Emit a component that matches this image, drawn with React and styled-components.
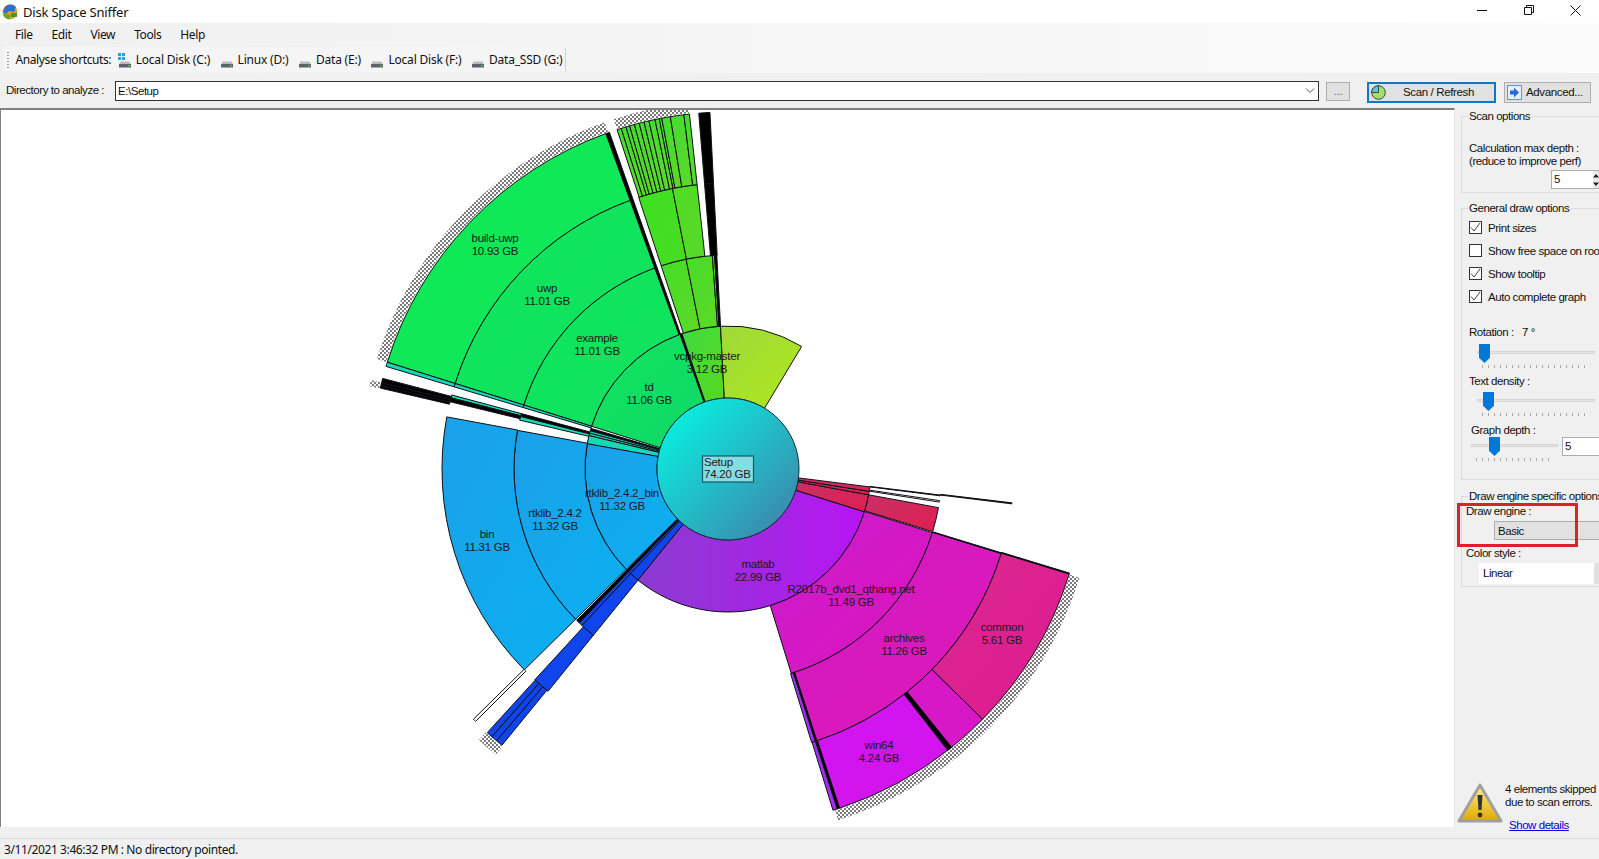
import React from "react";
import styled, { createGlobalStyle } from "styled-components";

const GlobalStyle = createGlobalStyle`
  html, body { margin: 0; padding: 0; }
  body {
    width: 1599px;
    height: 859px;
    overflow: hidden;
    background: #f0f0f0;
    font-family: "Liberation Sans", Arial, sans-serif;
    color: #111;
  }
  * { box-sizing: border-box; }
`;

// ---- chart data: angles in degrees clockwise from north, rings 0..3 ----
const CX = 728;
const CY = 469;
const R = [71, 143, 214, 286, 357];

const GREEN = ["#0fe85a", "#10e060"];
const LIME = ["#45dd28", "#5ed828"];
const BLUE = ["#1ca0e8", "#0ab0f2"];
const DBLUE = ["#1040f0", "#1048e8"];
const TEAL = ["#18d8b0", "#18d8c0"];
const BLACK = ["#000", "#000"];
const WHITE = ["#fff", "#fff"];

const sectors = [
  // green block
  [0, -72.6, -19.6, ["#12e45c", "#0ed868"]],
  [1, -72.6, -20, GREEN],
  [2, -72.6, -20, GREEN],
  [3, -72.6, -20, ["#0fe84f", "#10e860"]],
  [1, -20, -19.4, BLACK],
  [2, -20, -19.4, BLACK],
  [3, -20, -19.4, BLACK],
  [0, -19.6, -18.8, BLACK],
  [1, -73.3, -72.6, TEAL],
  [2, -73.3, -72.6, TEAL],
  [3, -73.3, -72.6, TEAL],
  // left slivers
  [0, -74.5, -73.5, BLACK],
  [0, -75.5, -74.5, TEAL],
  [0, -76.5, -75.5, TEAL],
  [0, -80, -76.5, TEAL],
  [1, -75.8, -75, BLACK],
  [1, -76.8, -75.8, TEAL],
  [2, -75.6, -75, TEAL],
  [2, -76.4, -75.6, BLACK],
  [3, -76, -75.3, BLACK],
  [3, -76.5, -76, BLACK],
  [3, -76.9, -76.5, BLACK],
  // vcpkg-master
  [0, -18.8, -3, ["#3edb40", "#58d820"]],
  [0, -3, 31, ["#a0d83a", "#aee81c"]],
  [1, -18.2, -11.3, LIME],
  [1, -11.3, -4.2, LIME],
  [1, -4.2, -3.6, LIME],
  [1, -3.6, -3, BLACK],
  [2, -18.2, -11.2, ["#3fe020", "#48dc24"]],
  [2, -11.2, -6.2, ["#50dc24", "#5ad82a"]],
  [2, -4.7, -2.9, BLACK],
  [3, -4.7, -2.9, BLACK],
  // thin folders on the outer ring
  ...[-18.1, -17.4, -16.6, -16, -15.2, -14.4, -13.6, -12.8, -11.8, -11.1, -10.7, -9.3, -7.1].map(
    (a, i, all) => [3, a, all[i + 1] ?? -6.2, ["#44dc30", "#5cd82a"]]
  ),
  // blue block
  [0, -134.6, -79.8, BLUE],
  [1, -134.6, -79.6, BLUE],
  [2, -134.6, -79.5, BLUE],
  [3, -135, -134.5, WHITE],
  [0, -136, -135, BLACK],
  [0, -137, -136, DBLUE],
  [0, -141, -137, DBLUE],
  [1, -136, -135, BLACK],
  [1, -137, -136, DBLUE],
  [1, -141, -137, DBLUE],
  [2, -141, -137.5, DBLUE],
  [3, -138.6, -137.6, DBLUE],
  [3, -139.6, -138.6, DBLUE],
  [3, -140.7, -139.6, DBLUE],
  // matlab
  [0, 107.4, 219, ["#8a3cd0", "#b814f4"], "left"],
  [1, 107.3, 162.8, ["#c81ed0", "#e012bc"]],
  [2, 107.2, 161.9, ["#d01ac4", "#e018b8"]],
  [2, 162.2, 163, ["#a030f0", "#a030f0"]],
  [2, 161.9, 162.2, BLACK],
  [3, 141.2, 161.8, ["#d014f4", "#d414e8"]],
  [3, 141.2, 142, BLACK],
  [3, 134.5, 141.2, ["#d818c8", "#d818c8"]],
  [3, 107.1, 134.5, ["#d82a90", "#e01890"]],
  [3, 161.8, 162.2, BLACK],
  [3, 162.2, 162.9, ["#a030f0", "#a030f0"]],
  // thick edge along the top of archives and common
  [2, 107.05, 107.2, BLACK],
  [3, 106.95, 107.1, BLACK],
  // red block
  [0, 100.4, 107.4, ["#c83068", "#e01e50"]],
  [0, 99, 100.4, ["#c83068", "#e01e50"]],
  [0, 97.2, 99, ["#c83068", "#e01e50"]],
  [1, 100.4, 107, ["#c83068", "#e01e50"]],
  [1, 98.5, 98.9, WHITE],
  [1, 97, 97.2, BLACK],
  [2, 96.8, 97, BLACK],
];

const hatches = [
  [-72.6, -19.6],
  [-18.1, -6.2],
  [-140.9, -137.4],
  [107.2, 162.6],
  [-77, -76],
];

const labels = [
  ["build-uwp", "10.93 GB", 495, 242],
  ["uwp", "11.01 GB", 547, 292],
  ["example", "11.01 GB", 597, 342],
  ["td", "11.06 GB", 649, 391],
  ["vcpkg-master", "3.12 GB", 707, 360],
  ["rtklib_2.4.2_bin", "11.32 GB", 622, 497],
  ["rtklib_2.4.2", "11.32 GB", 555, 517],
  ["bin", "11.31 GB", 487, 538],
  ["matlab", "22.99 GB", 758, 568],
  ["R2017b_dvd1_qthang.net", "11.49 GB", 851, 593],
  ["archives", "11.26 GB", 904, 642],
  ["common", "5.61 GB", 1002, 631],
  ["win64", "4.24 GB", 879, 749],
];

const point = (r, a) => {
  const t = (a * Math.PI) / 180;
  return [CX + r * Math.sin(t), CY - r * Math.cos(t)];
};

const sectorPath = (r0, r1, a0, a1) => {
  const [x0, y0] = point(r0, a0);
  const [x1, y1] = point(r1, a0);
  const [x2, y2] = point(r1, a1);
  const [x3, y3] = point(r0, a1);
  const big = a1 - a0 > 180 ? 1 : 0;
  return `M${x0} ${y0}L${x1} ${y1}A${r1} ${r1} 0 ${big} 1 ${x2} ${y2}L${x3} ${y3}A${r0} ${r0} 0 ${big} 0 ${x0} ${y0}Z`;
};

const Chart = () => (
  <ChartSvg viewBox="0 110 1454 717" width="1454" height="717">
    <defs>
      <pattern id="hatch" width="4" height="4" patternUnits="userSpaceOnUse">
        <rect width="2" height="2" fill="#7a7a7a" />
        <rect x="2" y="2" width="2" height="2" fill="#7a7a7a" />
      </pattern>
      <linearGradient id="center" x1="0.1" y1="0.1" x2="0.9" y2="0.9">
        <stop offset="0" stopColor="#08f0e0" />
        <stop offset="1" stopColor="#3c88ac" />
      </linearGradient>
      {sectors.map((s, i) => (
        <linearGradient key={i} id={`s${i}`} x1="0" y1="0" x2="1" y2={s[4] === "left" ? 0 : 1}>
          <stop offset="0" stopColor={s[3][0]} />
          <stop offset="1" stopColor={s[3][1]} />
        </linearGradient>
      ))}
    </defs>
    {hatches.map(([a0, a1], i) => (
      <path key={i} d={sectorPath(358, 368, a0, a1)} fill="url(#hatch)" />
    ))}
    {sectors.map(([ring, a0, a1], i) => (
      <path
        key={i}
        d={sectorPath(R[ring], R[ring + 1], a0, a1)}
        fill={`url(#s${i})`}
        stroke="#101018"
        strokeWidth="1"
      />
    ))}
    <circle cx={CX} cy={CY} r={R[0]} fill="url(#center)" stroke="#10303a" strokeWidth="1" />
    <rect x="702.5" y="456" width="51" height="26" fill="#85dde2" stroke="#15586a" strokeWidth="1.2" />
    <ChartText x="704" y="466" textAnchor="start">Setup</ChartText>
    <ChartText x="704" y="478" textAnchor="start">74.20 GB</ChartText>
    {labels.map(([name, size, x, y]) => (
      <g key={name}>
        <ChartText x={x} y={y} textAnchor="middle">{name}</ChartText>
        <ChartText x={x} y={y + 13} textAnchor="middle">{size}</ChartText>
      </g>
    ))}
  </ChartSvg>
);

// ---- small drawings ----
const AppIcon = () => (
  <svg width="16" height="18" viewBox="0 0 16 18">
    <circle cx="8" cy="9" r="7.5" fill="#e8a020" />
    <path d="M3 4a7.5 7.5 0 0 1 11 0l-2 5-5 -1-3 3-3-2z" fill="#2f6fd0" />
    <path d="M1 11a7.5 7.5 0 0 0 6 5.5l2-4-5-2z" fill="#60a830" />
    <rect x="9" y="10" width="6" height="4" fill="#3a9a38" />
  </svg>
);

const DriveIcon = ({ system }) => (
  <svg width="14" height="16" viewBox="0 0 14 16">
    {system && (
      <g fill="#28a0e0">
        <rect x="0" y="1" width="3" height="3" />
        <rect x="4" y="1" width="3" height="3" />
        <rect x="0" y="5" width="3" height="3" />
        <rect x="4" y="5" width="3" height="3" />
      </g>
    )}
    <path d="M2.5 9.5h9l1.5 3H1z" fill="#b8bcc0" />
    <rect x="1" y="12" width="12" height="3.5" fill="#5c6268" />
    <rect x="10" y="13" width="2" height="1.2" fill="#50d050" />
  </svg>
);

const PieIcon = () => (
  <svg width="15" height="15" viewBox="0 0 15 15">
    <circle cx="7.5" cy="7.5" r="6.8" fill="#a8dc6c" stroke="#3a4a40" />
    <path d="M7.5 7.5V.7A6.8 6.8 0 0 0 .7 7.5z" fill="#5cc8d8" stroke="#3a4a40" />
  </svg>
);

const ArrowIcon = () => (
  <svg width="15" height="15" viewBox="0 0 15 15">
    <rect x="0.5" y="0.5" width="14" height="14" fill="#e8eef8" stroke="#7090c8" />
    <path d="M3 5.5h4V2.5l5 5-5 5v-3H3z" fill="#2a6ae0" />
  </svg>
);

const WarningIcon = () => (
  <svg width="46" height="41" viewBox="0 0 46 41">
    <defs>
      <linearGradient id="warn" x1="0" y1="0" x2="0" y2="1">
        <stop offset="0" stopColor="#fff08a" />
        <stop offset="1" stopColor="#e0a800" />
      </linearGradient>
    </defs>
    <path d="M23 2L44 38H2z" fill="url(#warn)" stroke="#a0a0a0" strokeWidth="3" strokeLinejoin="round" />
    <path d="M20.5 12h5l-1 15h-3z" fill="#333" />
    <circle cx="23" cy="32" r="2.4" fill="#333" />
  </svg>
);

const Spin = () => (
  <SpinArrows>
    <svg width="6" height="18" viewBox="0 0 6 18">
      <path d="M3 3l3 3.5H0zM3 15l3-3.5H0z" fill="#222" />
    </svg>
  </SpinArrows>
);

const Slider = ({ indent, width, thumb, gap = 0 }) => (
  <SliderRoot $indent={indent} $width={width} $gap={gap}>
    <SliderTrack />
    <SliderThumb $at={thumb} />
    <SliderTicks />
  </SliderRoot>
);

const shortcuts = [
  ["Local Disk (C:)", true],
  ["Linux (D:)"],
  ["Data (E:)"],
  ["Local Disk (F:)"],
  ["Data_SSD (G:)"],
];

const options = [
  ["Print sizes", true],
  ["Show free space on root", false],
  ["Show tooltip", true],
  ["Auto complete graph", true],
];

const App = () => (
  <Window>
    <GlobalStyle />
    <TitleBar>
      <AppIcon />
      <TitleText>Disk Space Sniffer</TitleText>
      <WindowControls>
        <svg width="10" height="10" viewBox="0 0 10 10"><path d="M0 5.5h10" stroke="#111" /></svg>
        <svg width="10" height="10" viewBox="0 0 10 10"><path d="M.5 2.5h7v7h-7zM2.5 2.5v-2h7v7h-2" fill="none" stroke="#111" /></svg>
        <svg width="11" height="11" viewBox="0 0 11 11"><path d="M.5.5l10 10M10.5.5l-10 10" stroke="#111" /></svg>
      </WindowControls>
    </TitleBar>
    <TopBars>
      <Menu>
        {["File", "Edit", "View", "Tools", "Help"].map((m) => (
          <MenuItem key={m}>{m}</MenuItem>
        ))}
      </Menu>
      <Toolbar>
        <Grip />
        <ToolbarLabel>Analyse shortcuts:</ToolbarLabel>
        {shortcuts.map(([name, system]) => (
          <Shortcut key={name}>
            <DriveIcon system={system} />
            {name}
          </Shortcut>
        ))}
      </Toolbar>
    </TopBars>
    <DirectoryRow>
      <DirLabel>Directory to analyze :</DirLabel>
      <PathBox>
        E:\Setup
        <svg width="10" height="6" viewBox="0 0 10 6"><path d="M1 .5l4 4 4-4" fill="none" stroke="#555" /></svg>
      </PathBox>
      <BrowseButton>...</BrowseButton>
      <ScanButton>
        <PieIcon />
        <ScanLabel>Scan / Refresh</ScanLabel>
      </ScanButton>
      <AdvancedButton>
        <ArrowIcon />
        Advanced...
      </AdvancedButton>
    </DirectoryRow>
    <Main>
      <Canvas>
        <Chart />
      </Canvas>
      <Side>
        <Group $height={84} $pad={19}>
          <Legend>Scan options</Legend>
          <GroupNote>
            Calculation max depth :<br />
            (reduce to improve perf)
          </GroupNote>
          <SpinBox $offset={82} $top={2}>5<Spin /></SpinBox>
        </Group>
        <Group $height={279} $pad={1} $gap={8}>
          <Legend>General draw options</Legend>
          {options.map(([text, checked]) => (
            <CheckRow key={text}>
              <CheckBox>
                {checked && (
                  <svg width="11" height="11" viewBox="0 0 11 11">
                    <path d="M1 5.5l3 3.5 6-8" fill="none" stroke="#444" />
                  </svg>
                )}
              </CheckBox>
              {text}
            </CheckRow>
          ))}
          <SliderLabel $top={17}>Rotation :&nbsp;&nbsp; 7 °</SliderLabel>
          <Slider indent={8} width={118} thumb={2} gap={5} />
          <SliderLabel $top={1}>Text density :</SliderLabel>
          <Slider indent={8} width={118} thumb={6} gap={4} />
          <SliderLabel $top={2} $indent={2}>Graph depth :</SliderLabel>
          <DepthRow>
            <Slider indent={2} width={87} thumb={18} />
            <SpinBox $offset={4} $top={0}>5<Spin /></SpinBox>
          </DepthRow>
        </Group>
        <Group $height={98} $pad={1} $gap={9}>
          <Legend>Draw engine specific options</Legend>
          <EngineLabel>Draw engine :</EngineLabel>
          <Combo $indent={25}>Basic</Combo>
          <EngineLabel>Color style :</EngineLabel>
          <Combo $indent={10} $white>Linear</Combo>
        </Group>
        <Annotation />
        <Warning>
          <WarningIcon />
          <WarningBody>
            4 elements skipped<br />
            due to scan errors.
            <DetailsLink>Show details</DetailsLink>
          </WarningBody>
        </Warning>
      </Side>
    </Main>
    <StatusBar>3/11/2021 3:46:32 PM : No directory pointed.</StatusBar>
  </Window>
);

export default App;

//------------------- Styles ------------------------//

const uiText = `
  font-family: "Liberation Sans", Arial, sans-serif;
  font-size: 11.5px;
  letter-spacing: -0.45px;
  white-space: nowrap;
`;

const segoeText = `
  font-family: "Noto Sans", "Open Sans", sans-serif;
  font-size: 12px;
  letter-spacing: -0.4px;
  white-space: nowrap;
`;

const Window = styled.div`
  width: 1599px;
  height: 859px;
  display: flex;
  flex-direction: column;
  overflow: hidden;
  position: relative;
`;

const TitleBar = styled.div`
  height: 23px;
  flex: none;
  background: #fff;
  display: flex;
  align-items: center;
  padding-left: 2px;
  gap: 5px;
`;

const TitleText = styled.div`
  font-family: "Noto Sans", sans-serif;
  font-size: 13px;
  letter-spacing: -0.2px;
  color: #111;
`;

const WindowControls = styled.div`
  margin-left: auto;
  width: 122px;
  display: flex;
  justify-content: space-between;
  align-items: center;
  padding-right: 18px;
  height: 100%;
  margin-top: -3px;
`;

const TopBars = styled.div`
  height: 50px;
  flex: none;
  background: linear-gradient(to right, #f0f0f0, #fbfbfb);
`;

const Menu = styled.div`
  height: 23px;
  display: flex;
  align-items: center;
  padding-left: 15px;
  gap: 19px;
`;

const MenuItem = styled.span`
  ${segoeText}
  min-width: 15px;
`;

const Toolbar = styled.div`
  width: 563px;
  height: 25px;
  margin: 1px 0 0 3px;
  display: flex;
  align-items: center;
  background: #f5f5f5;
  border-right: 1px solid #d4d4d4;
  padding-left: 4px;
  gap: 9.5px;
`;

const Grip = styled.div`
  width: 2px;
  height: 16px;
  margin-right: -3px;
  background: repeating-linear-gradient(to bottom, #999 0 1px, transparent 1px 3px);
`;

const ToolbarLabel = styled.span`
  ${segoeText}
  margin-right: -3px;
`;

const Shortcut = styled.span`
  ${segoeText}
  letter-spacing: -0.2px;
  display: inline-flex;
  align-items: center;
  gap: 4px;
`;

const DirectoryRow = styled.div`
  height: 35px;
  flex: none;
  display: flex;
  align-items: flex-start;
  padding: 8px 0 0 6px;
  background: #f0f0f0;
`;

const DirLabel = styled.span`
  ${uiText}
  width: 109px;
  height: 20px;
  line-height: 18px;
`;

const PathBox = styled.div`
  ${uiText}
  width: 1204px;
  height: 20px;
  background: #fff;
  border: 1px solid #333;
  display: flex;
  align-items: center;
  justify-content: space-between;
  padding: 0 3px 1px 2px;
`;

const Button = styled.div`
  ${uiText}
  letter-spacing: -0.35px;
  height: 21px;
  margin-top: 1px;
  display: flex;
  align-items: center;
  background: #e1e1e1;
  border: 1px solid #adadad;
  padding-bottom: 1px;
`;

const BrowseButton = styled(Button)`
  width: 24px;
  height: 19px;
  margin-left: 7px;
  justify-content: center;
  color: #666;
`;

const ScanButton = styled(Button)`
  width: 129px;
  margin-left: 17px;
  border: 2px solid #0b78c8;
  padding-left: 2px;
`;

const ScanLabel = styled.span`
  flex: 1;
  text-align: center;
  padding-right: 3px;
`;

const AdvancedButton = styled(Button)`
  width: 87px;
  margin-left: 8px;
  padding-left: 2px;
  gap: 4px;
`;

const Main = styled.div`
  flex: 1;
  min-height: 0;
  display: flex;
  background: #f0f0f0;
`;

const Canvas = styled.div`
  width: 1455px;
  height: 719px;
  flex: none;
  background: #fff;
  border-top: 2px solid #808080;
  border-left: 1px solid #808080;
  border-right: 1px solid #e8e8e8;
  overflow: hidden;
`;

const ChartSvg = styled.svg`
  display: block;
  margin-left: -1px;
`;

const ChartText = styled.text`
  font-family: "Liberation Sans", Arial, sans-serif;
  font-size: 11.5px;
  letter-spacing: -0.25px;
  fill: #1a1a1a;
`;

const Side = styled.aside`
  position: relative;
  flex: 1;
  overflow: hidden;
  padding: 1px 0 0 6px;
  ${uiText}
`;

const Group = styled.fieldset`
  width: 170px;
  height: ${(p) => p.$height}px;
  margin: ${(p) => p.$gap || 0}px 0 0 0;
  padding: ${(p) => p.$pad}px 0 0 7px;
  border: 1px solid #dcdcdc;
`;

const Legend = styled.legend`
  margin-left: -1px;
  padding: 0 1px;
  line-height: 14px;
`;

const GroupNote = styled.div`
  line-height: 13px;
`;

const SpinBox = styled.div`
  width: 60px;
  height: 19px;
  margin-left: ${(p) => p.$offset}px;
  margin-top: ${(p) => p.$top}px;
  background: #fff;
  border: 1px solid #adadad;
  padding-left: 2px;
  line-height: 17px;
  position: relative;
  flex: none;
`;

const SpinArrows = styled.div`
  position: absolute;
  left: 41px;
  top: 0;
  width: 8px;
  height: 17px;
  background: #e8e8e8;
`;

const CheckRow = styled.div`
  height: 23px;
  display: flex;
  align-items: center;
  gap: 6px;
`;

const CheckBox = styled.span`
  width: 13px;
  height: 13px;
  background: #fff;
  border: 1px solid #333;
  display: flex;
  align-items: center;
  justify-content: center;
`;

const SliderLabel = styled.div`
  margin-top: ${(p) => p.$top}px;
  margin-left: ${(p) => p.$indent || 0}px;
  line-height: 14px;
`;

const SliderRoot = styled.div`
  position: relative;
  width: ${(p) => p.$width}px;
  height: 29px;
  margin-top: ${(p) => p.$gap}px;
  margin-left: ${(p) => p.$indent}px;
  flex: none;
`;

const SliderTrack = styled.div`
  position: absolute;
  left: 0;
  right: 0;
  top: 7px;
  height: 3px;
  background: #e4e4e4;
  border: 1px solid #d6d6d6;
`;

const SliderThumb = styled.div`
  position: absolute;
  left: ${(p) => p.$at}px;
  top: 0;
  width: 11px;
  height: 19px;
  background: #0078d7;
  clip-path: polygon(0 0, 100% 0, 100% 72%, 50% 100%, 0 72%);
`;

const SliderTicks = styled.div`
  position: absolute;
  left: 5px;
  right: 5px;
  top: 21px;
  height: 3px;
  background: repeating-linear-gradient(to right, #aaa 0 1px, transparent 1px 6px);
`;

const DepthRow = styled.div`
  display: flex;
  align-items: flex-start;
`;

const EngineLabel = styled.div`
  margin-left: -3px;
  line-height: 14px;
  height: 15px;
`;

const Combo = styled.div`
  width: 140px;
  height: ${(p) => (p.$white ? 21 : 19)}px;
  margin: 2px 0 6px ${(p) => p.$indent}px;
  padding-left: ${(p) => (p.$white ? 4 : 3)}px;
  line-height: ${(p) => (p.$white ? 21 : 18)}px;
  background: ${(p) => (p.$white ? "linear-gradient(to right, #fff 0 115px, #e1e1e1 115px)" : "#e1e1e1")};
  border: ${(p) => (p.$white ? "none" : "1px solid #adadad")};
`;

const Annotation = styled.div`
  position: absolute;
  left: 2px;
  top: 395px;
  width: 121px;
  height: 44px;
  border: 3px solid #d8232f;
`;

const Warning = styled.div`
  position: absolute;
  left: 2px;
  top: 675px;
  display: flex;
  gap: 2px;
`;

const WarningBody = styled.div`
  line-height: 13px;
`;

const DetailsLink = styled.div`
  margin: 10px 0 0 4px;
  color: #0000d8;
  text-decoration: underline;
`;

const StatusBar = styled.div`
  height: 21px;
  flex: none;
  display: flex;
  align-items: center;
  padding-left: 4px;
  border-top: 1px solid #dcdcdc;
  background: #f0f0f0;
  ${segoeText}
`;
